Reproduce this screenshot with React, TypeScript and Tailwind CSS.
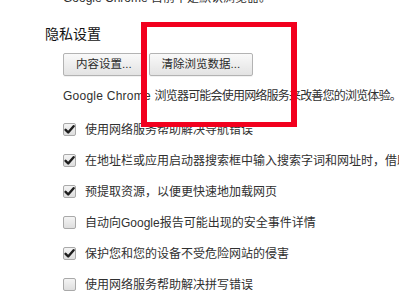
import React from "react";

const rows: { label: string; checked: boolean }[] = [
	{ label: "使用网络服务帮助解决导航错误", checked: true },
	{ label: "在地址栏或应用启动器搜索框中输入搜索字词和网址时，借助预测服务完成搜索和网址", checked: true },
	{ label: "预提取资源，以便更快速地加载网页", checked: true },
	{ label: "自动向Google报告可能出现的安全事件详情", checked: false },
	{ label: "保护您和您的设备不受危险网站的侵害", checked: true },
	{ label: "使用网络服务帮助解决拼写错误", checked: false },
];

const CheckBox: React.FC<{ checked: boolean }> = ({ checked }) => (
	<span className="w-[13px] h-[13px] shrink-0 rounded-[2px] border border-[#a9a9a9] bg-gradient-to-b from-[#f4f4f4] to-[#dedede] flex items-center justify-center">
		{checked && (
			<svg width="11" height="11" viewBox="0 0 11 11">
				<path
					d="M1.6 5.8 L4.2 8.5 L9.6 2.2"
					fill="none"
					stroke="#1e1e1e"
					strokeWidth="2.4"
					strokeLinecap="round"
					strokeLinejoin="round"
				/>
			</svg>
		)}
	</span>
);

const Button: React.FC<{ children: React.ReactNode }> = ({ children }) => (
	<button className="h-[23px] px-[12px] rounded-[2px] border border-[#b3b3b3] bg-gradient-to-b from-[#f9f9f9] to-[#e3e3e3] text-[11.5px] text-[#2a2a2a] leading-[21px] whitespace-nowrap shadow-[0_1px_0_rgba(0,0,0,0.05)]">
		{children}
	</button>
);

const App: React.FC = () => {
	return (
		<div
			className="relative w-[399px] h-[299px] overflow-hidden bg-white text-[#303030] text-[12px]"
			style={{ fontFamily: '"Liberation Sans", "Noto Sans CJK SC", sans-serif' }}
		>
			<p className="ml-[63px] mt-[-10px] h-[16px] leading-[16px] whitespace-nowrap">
				Google Chrome 目前不是默认浏览器。
			</p>

			<h3 className="ml-[45px] mt-[18px] h-[20px] leading-[20px] text-[14px] text-[#111]">
				隐私设置
			</h3>

			<div className="ml-[63px] mt-[9px] flex gap-[4px]">
				<Button>内容设置...</Button>
				<Button>清除浏览数据...</Button>
			</div>

			<p className="ml-[63px] mt-[12px] h-[16px] leading-[16px] whitespace-nowrap">
				<span className="tracking-[0.25px]">Google Chrome </span>
				<span className="tracking-[-0.8px]">浏览器可能会使用网络服务来改善您的浏览体验。</span>
			</p>

			<div className="ml-[63px] mt-[10px] flex flex-col">
				{rows.map((r) => (
					<label key={r.label} className="h-[31px] flex items-center gap-[9px] whitespace-nowrap">
						<CheckBox checked={r.checked} />
						<span className="leading-[16px]">{r.label}</span>
					</label>
				))}
			</div>

			<div className="absolute left-[141px] top-[22px] w-[156px] h-[105px] border-x-[6px] border-y-[5px] border-[#f2001e] pointer-events-none" />
		</div>
	);
};

export default App;
